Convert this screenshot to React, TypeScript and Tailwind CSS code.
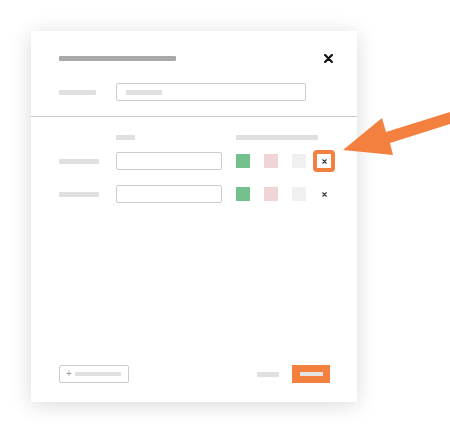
import React from "react";

const bar = "h-[5px] rounded-[1px] bg-[#e0e0e0]";

function TinyX({ size = 5, stroke = 1.1 }: { size?: number; stroke?: number }) {
  return (
    <svg width={size} height={size} viewBox="0 0 10 10">
      <path d="M1.5 1.5L8.5 8.5M8.5 1.5L1.5 8.5" stroke="#333" strokeWidth={stroke * (10 / size)} strokeLinecap="round" />
    </svg>
  );
}

function Row({ highlighted }: { highlighted?: boolean }) {
  return (
    <div className="flex h-[22px] items-center">
      <div className="w-[57px]">
        <div className={`${bar} w-[40px]`} />
      </div>
      <div className="h-[18px] w-[106px] rounded-[2px] border border-[#cccccc] bg-white" />
      <div className="ml-[14px] h-[14px] w-[14px] bg-[#75c18d]" />
      <div className="ml-[14px] h-[14px] w-[14px] bg-[#f0d5d6]" />
      <div className="ml-[14px] h-[14px] w-[14px] bg-[#f0f0f0]" />
      <div
        className={`ml-[7px] flex h-[22px] w-[22px] items-center justify-center rounded-[4px] border-[4px] ${
          highlighted ? "border-[#f4803f]" : "border-transparent"
        }`}
      >
        <TinyX />
      </div>
    </div>
  );
}

export default function App() {
  return (
    <div className="relative h-[432px] w-[450px] overflow-hidden bg-white font-['Liberation_Sans',sans-serif]">
      <div className="pl-[31px] pt-[31px]">
        <div className="flex h-[371px] w-[326px] flex-col bg-white shadow-[0_3px_20px_rgba(0,0,0,0.15)]">
          {/* header */}
          <div className="border-b border-[#cccccc] pb-[15px] pl-[28px] pr-[24px] pt-[20px]">
            <div className="flex h-[14px] items-center justify-between">
              <div className="h-[5px] w-[117px] rounded-[1px] bg-[#a9a9a9]" />
              <svg width="9" height="9" viewBox="0 0 10 10">
                <path d="M1.2 1.2L8.8 8.8M8.8 1.2L1.2 8.8" stroke="#111" strokeWidth="2.4" strokeLinecap="round" />
              </svg>
            </div>
            <div className="mt-[18px] flex h-[18px] items-center">
              <div className="w-[57px]">
                <div className={`${bar} w-[37px]`} />
              </div>
              <div className="flex h-[18px] w-[190px] items-center rounded-[2px] border border-[#cccccc] pl-[9px]">
                <div className={`${bar} w-[36px]`} />
              </div>
            </div>
          </div>

          {/* body */}
          <div className="flex-1 pl-[28px] pt-[18px]">
            <div className="flex h-[5px]">
              <div className="ml-[57px] h-[5px] w-[19px] bg-[#e0e0e0]" />
              <div className="ml-[101px] h-[5px] w-[82px] bg-[#e0e0e0]" />
            </div>
            <div className="mt-[10px] flex flex-col gap-[11px]">
              <Row highlighted />
              <Row />
            </div>
          </div>

          {/* footer */}
          <div className="flex items-center justify-between pb-[19px] pl-[28px] pr-[27px]">
            <div className="flex h-[18px] w-[70px] items-center rounded-[2px] border border-[#cccccc] pl-[6px]">
              <span className="text-[10px] leading-none text-[#999999]">+</span>
              <div className="ml-[3px] h-[4px] w-[46px] bg-[#e0e0e0]" />
            </div>
            <div className="flex items-center">
              <div className="h-[5px] w-[22px] bg-[#e0e0e0]" />
              <div className="ml-[13px] flex h-[18px] w-[38px] items-center justify-center bg-[#f4803f]">
                <div className="h-[4px] w-[23px] bg-[#e4e4e4]" />
              </div>
            </div>
          </div>
        </div>
      </div>

      <svg className="pointer-events-none absolute left-0 top-0" width="450" height="432" viewBox="0 0 450 432">
        <polygon points="343,150 382,118 386,132 456,110 456,122 390,143 393,155" fill="#f4803f" />
      </svg>
    </div>
  );
}
